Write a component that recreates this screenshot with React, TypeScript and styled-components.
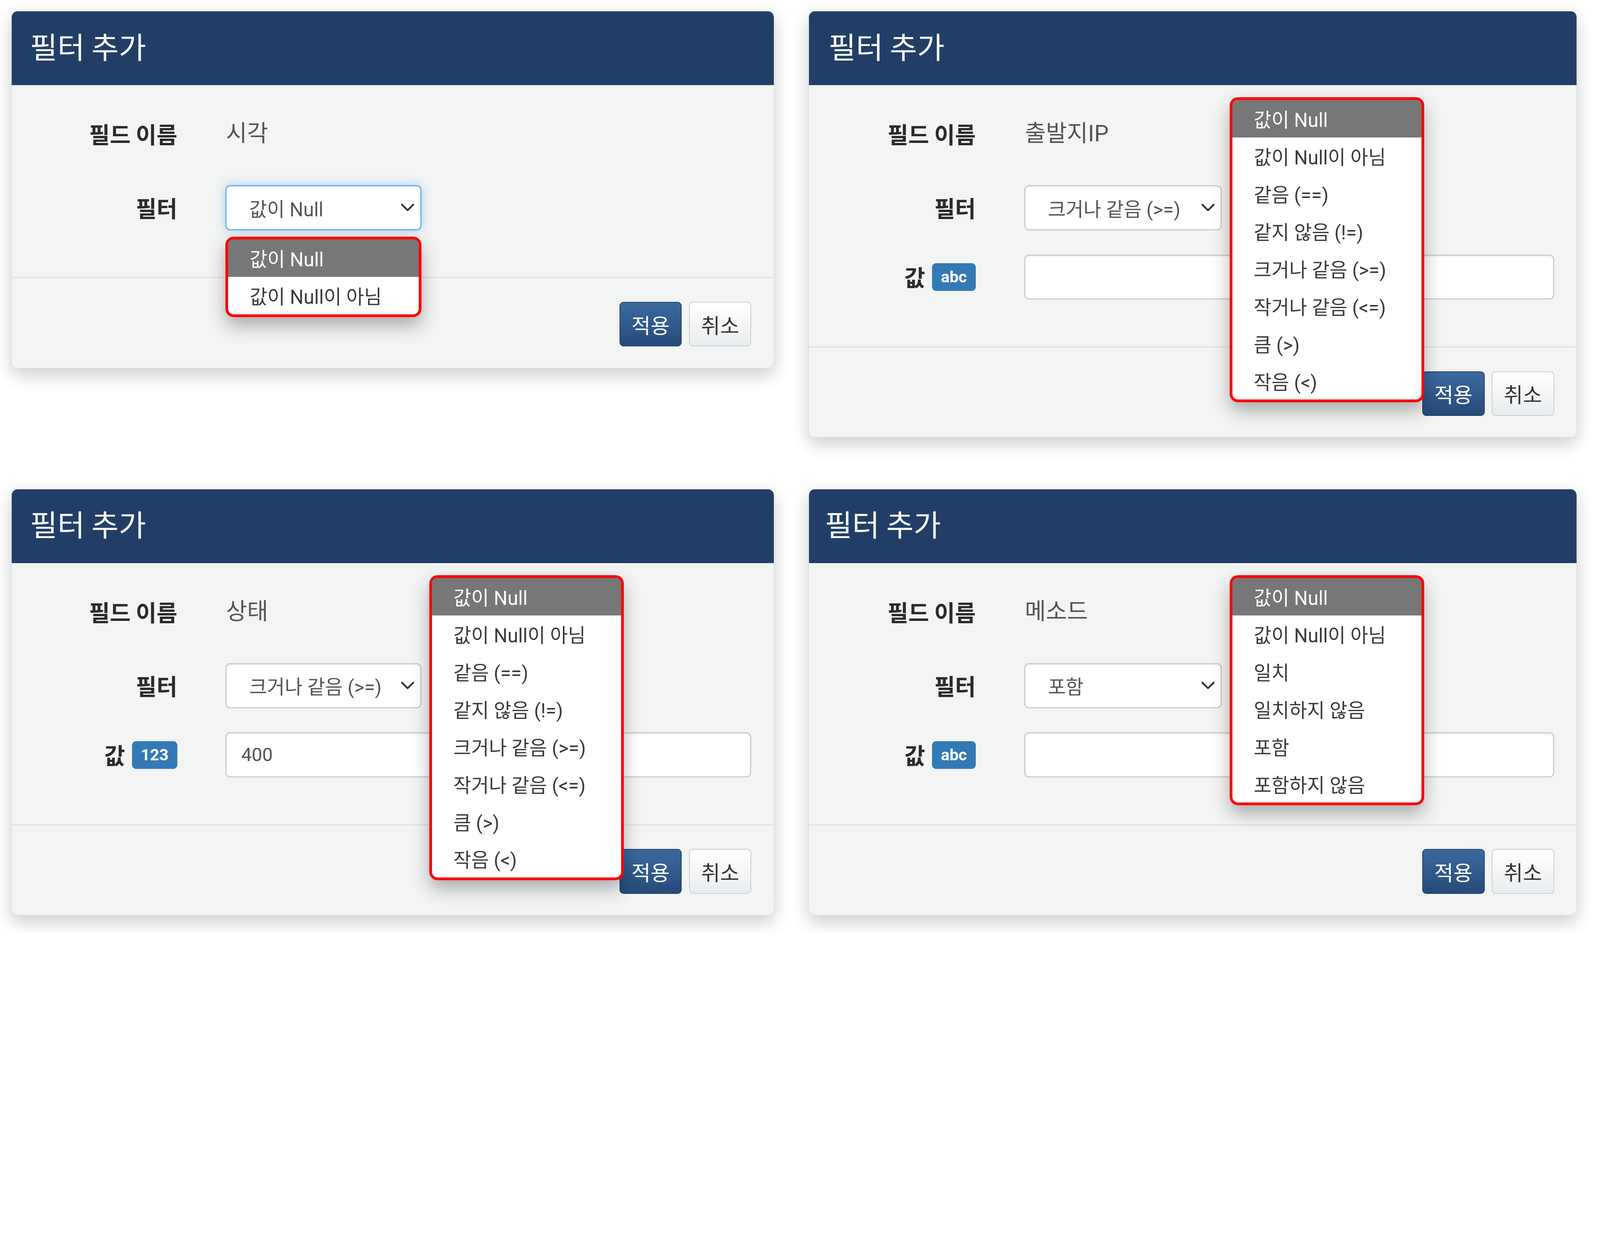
import React from 'react';
import styled, { createGlobalStyle, css } from 'styled-components';

// The reference is measured in screenshot pixels; u() turns them into viewport units
// so the layout keeps its proportions whatever the device pixel ratio is.
const u = (n: number) => `${((n * 100) / 5383).toFixed(4)}vw`;

const GlobalStyle = createGlobalStyle`
  html, body {
    margin: 0;
    padding: 0;
    background: #ffffff;
    overflow-x: hidden;
  }
  body {
    font-family: Roboto, "Noto Sans CJK KR", sans-serif;
    color: #333333;
  }
  * {
    box-sizing: border-box;
  }
`;

const NULL_OPTIONS = ['값이 Null', '값이 Null이 아님'];
const NUMBER_OPTIONS = [
  ...NULL_OPTIONS,
  '같음 (==)',
  '같지 않음 (!=)',
  '크거나 같음 (>=)',
  '작거나 같음 (<=)',
  '큼 (>)',
  '작음 (<)',
];
const STRING_OPTIONS = [...NULL_OPTIONS, '일치', '일치하지 않음', '포함', '포함하지 않음'];

type Placement = 'below' | 'side';

interface FilterPanelProps {
  field: string;
  filter: string;
  options: string[];
  placement: Placement;
  focused?: boolean;
  value?: { kind: 'abc' | '123'; text: string };
  titleInset?: number;
}

const Chevron = () => (
  <ChevronIcon viewBox="0 0 46 28">
    <path d="M4 4 L23 23 L42 4" fill="none" stroke="#333" strokeWidth="6" strokeLinecap="round" strokeLinejoin="round" />
  </ChevronIcon>
);

const FilterPanel = ({ field, filter, options, placement, focused, value, titleInset = 62 }: FilterPanelProps) => (
  <Panel>
    <Header $inset={titleInset}>
      <Title>필터 추가</Title>
    </Header>
    <Body>
      <FormRow $static>
        <Label>필드 이름</Label>
        <StaticValue>{field}</StaticValue>
      </FormRow>
      <FormRow>
        <Label>필터</Label>
        <SelectWrap>
          <SelectBox $focused={focused}>
            <span>{filter}</span>
            <Chevron />
          </SelectBox>
          <Popup $placement={placement}>
            {options.map((option, i) => (
              <PopupItem key={option} $active={i === 0}>
                {option}
              </PopupItem>
            ))}
          </Popup>
        </SelectWrap>
      </FormRow>
      {value && (
        <FormRow>
          <Label>
            값<TypeBadge>{value.kind}</TypeBadge>
          </Label>
          <TextInput defaultValue={value.text} readOnly />
        </FormRow>
      )}
    </Body>
    <Footer>
      <Button $primary>적용</Button>
      <Button>취소</Button>
    </Footer>
  </Panel>
);

const App = () => (
  <>
    <GlobalStyle />
    <Page>
      <FilterPanel field="시각" filter="값이 Null" options={NULL_OPTIONS} placement="below" focused />
      <FilterPanel
        field="출발지IP"
        filter="크거나 같음 (>=)"
        options={NUMBER_OPTIONS}
        placement="side"
        value={{ kind: 'abc', text: '' }}
        titleInset={66}
      />
      <FilterPanel
        field="상태"
        filter="크거나 같음 (>=)"
        options={NUMBER_OPTIONS}
        placement="side"
        value={{ kind: '123', text: '400' }}
      />
      <FilterPanel
        field="메소드"
        filter="포함"
        options={STRING_OPTIONS}
        placement="side"
        value={{ kind: 'abc', text: '' }}
        titleInset={54}
      />
    </Page>
  </>
);

const Page = styled.div`
  display: grid;
  grid-template-columns: ${u(2567)} ${u(2586)};
  column-gap: ${u(115)};
  row-gap: ${u(173)};
  align-items: start;
  padding: ${u(37)} 0 ${u(60)} ${u(38)};
`;

const Panel = styled.div`
  background: #f3f4f4;
  border: ${u(2)} solid rgba(0, 0, 0, 0.1);
  border-radius: ${u(22)};
  box-shadow: 0 ${u(22)} ${u(60)} rgba(0, 0, 0, 0.2);
`;

const Header = styled.div<{ $inset: number }>`
  display: flex;
  align-items: center;
  height: ${u(248)};
  padding: 0 0 ${u(18)} ${p => u(p.$inset)};
  background: #213f66;
  border-radius: ${u(20)} ${u(20)} 0 0;
`;

const Title = styled.h4`
  margin: 0;
  font-family: "Noto Sans CJK KR", sans-serif;
  font-size: ${u(100)};
  font-weight: 400;
  line-height: 1;
  color: #ffffff;
`;

const Body = styled.div`
  display: flex;
  flex-direction: column;
  gap: ${u(81)};
  padding: ${u(72)} ${u(76)} ${u(157)} 0;
`;

const FormRow = styled.div<{ $static?: boolean }>`
  display: grid;
  grid-template-columns: 22.4% 1fr;
  column-gap: 6.5%;
  align-items: center;
  min-height: ${p => u(p.$static ? 184 : 152)};
`;

const Label = styled.div`
  justify-self: end;
  display: flex;
  align-items: center;
  gap: ${u(23)};
  font-family: "Noto Sans CJK KR", sans-serif;
  font-size: ${u(76)};
  font-weight: 700;
  line-height: 1;
  color: #2b2b2b;
`;

const StaticValue = styled.div`
  font-size: ${u(77)};
  line-height: 1;
  color: #555555;
  padding-left: ${u(2)};
`;

const SelectWrap = styled.div`
  position: relative;
  width: 37.3%;
`;

const SelectBox = styled.div<{ $focused?: boolean }>`
  display: flex;
  align-items: center;
  justify-content: space-between;
  height: ${u(152)};
  padding: 0 ${u(20)} 0 ${u(76)};
  background: #ffffff;
  border: ${u(4)} solid #cccccc;
  border-radius: ${u(16)};
  font-size: ${u(65)};
  white-space: nowrap;
  color: #555555;
  box-shadow: inset 0 ${u(4)} ${u(4)} rgba(0, 0, 0, 0.06);
  ${p =>
    p.$focused &&
    css`
      border-color: #66afe9;
      box-shadow: inset 0 ${u(4)} ${u(4)} rgba(0, 0, 0, 0.06), 0 0 ${u(32)} rgba(102, 175, 233, 0.55);
    `}
`;

const ChevronIcon = styled.svg`
  width: ${u(46)};
  height: ${u(28)};
  flex-shrink: 0;
`;

const Popup = styled.div<{ $placement: Placement }>`
  position: absolute;
  z-index: 2;
  overflow: hidden;
  background: #ffffff;
  border: ${u(10)} solid #ff0000;
  border-radius: ${u(28)};
  box-shadow: 0 ${u(28)} ${u(60)} rgba(0, 0, 0, 0.3);
  ${p =>
    p.$placement === 'below'
      ? css`
          top: calc(100% + ${u(21)});
          left: 0;
          width: 100%;
        `
      : css`
          top: -${u(296)};
          left: calc(100% + ${u(26)});
          width: ${u(655)};
        `}
`;

const PopupItem = styled.div<{ $active?: boolean }>`
  display: flex;
  align-items: center;
  height: ${u(126)};
  padding-left: ${u(72)};
  font-size: ${u(65)};
  white-space: nowrap;
  color: ${p => (p.$active ? '#ffffff' : '#3a3a3a')};
  background: ${p => (p.$active ? '#777777' : 'transparent')};
`;

const TypeBadge = styled.span`
  display: inline-flex;
  align-items: center;
  height: ${u(93)};
  padding: 0 ${u(30)};
  background: #337ab7;
  border-radius: ${u(14)};
  font-family: Roboto, sans-serif;
  font-size: ${u(54)};
  font-weight: 700;
  color: #ffffff;
`;

const TextInput = styled.input`
  width: 100%;
  height: ${u(152)};
  padding: 0 ${u(49)};
  background: #ffffff;
  border: ${u(4)} solid #cccccc;
  border-radius: ${u(16)};
  box-shadow: inset 0 ${u(4)} ${u(4)} rgba(0, 0, 0, 0.06);
  font-family: Roboto, sans-serif;
  font-size: ${u(63)};
  color: #555555;
  outline: none;
`;

const Footer = styled.div`
  display: flex;
  justify-content: flex-end;
  gap: ${u(24)};
  padding: ${u(80)} ${u(76)} ${u(72)};
  border-top: ${u(4)} solid #e1e3e3;
`;

const Button = styled.div<{ $primary?: boolean }>`
  display: flex;
  align-items: center;
  justify-content: center;
  width: ${u(210)};
  height: ${u(150)};
  border-radius: ${u(14)};
  font-family: "Noto Sans CJK KR", sans-serif;
  font-size: ${u(70)};
  ${p =>
    p.$primary
      ? css`
          color: #ffffff;
          background: linear-gradient(#3b6a9f, #264b79);
          border: ${u(3)} solid #21426b;
        `
      : css`
          color: #333333;
          background: linear-gradient(#ffffff, #e9ecef);
          border: ${u(3)} solid #cfcfcf;
        `}
`;

export default App;
